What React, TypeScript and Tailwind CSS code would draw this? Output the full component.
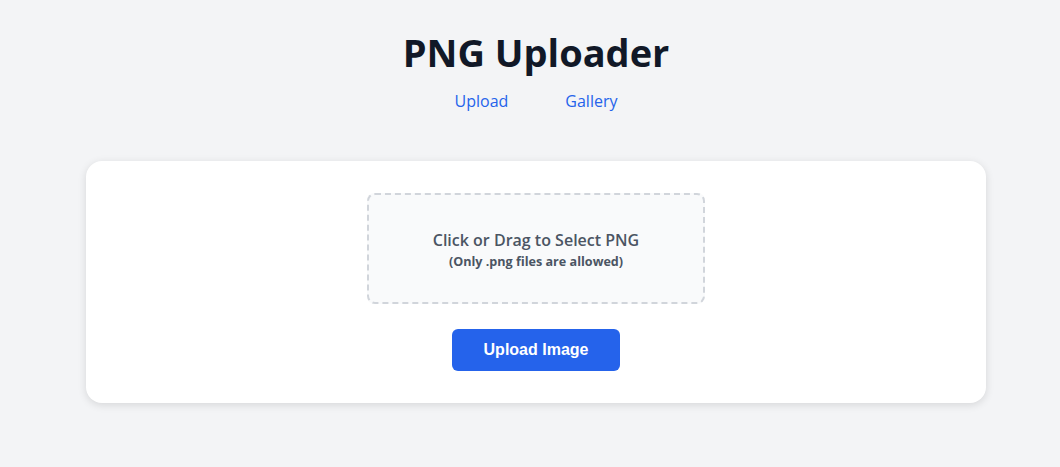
export default function App() {
  return (
    <div className="min-h-[467px] w-full bg-[#f3f4f6] flex flex-col items-center pl-[12px]">
      <h1 className="mt-[27px] text-[38px] leading-[50px] font-bold text-[#111827] font-['Open_Sans',sans-serif]">
        PNG Uploader
      </h1>
      <nav className="mt-[13px] flex gap-[57px] font-['Open_Sans',sans-serif] text-[16px] leading-[22px] font-medium text-[#2563eb]">
        <a href="#">Upload</a>
        <a href="#">Gallery</a>
      </nav>
      <div className="mt-[49px] w-[900px] bg-white rounded-2xl shadow-[0_2px_8px_rgba(0,0,0,0.12)] flex flex-col items-center pt-[32px] pb-[32px]">
        <div className="w-[338px] h-[111px] border-2 border-dashed border-[#d1d5db] bg-[#f9fafb] rounded-lg flex flex-col items-center justify-center pt-[2px] font-['Open_Sans',sans-serif] text-[#4b5563]">
          <div className="text-[16px] leading-[24px] font-semibold">Click or Drag to Select PNG</div>
          <div className="text-[12.6px] leading-[20px] font-bold">(Only .png files are allowed)</div>
        </div>
        <button className="mt-[25px] w-[168px] h-[42px] rounded-md bg-[#2563eb] text-white font-bold text-[16px] font-['Liberation_Sans',Arial,sans-serif]">
          Upload Image
        </button>
      </div>
    </div>
  );
}
